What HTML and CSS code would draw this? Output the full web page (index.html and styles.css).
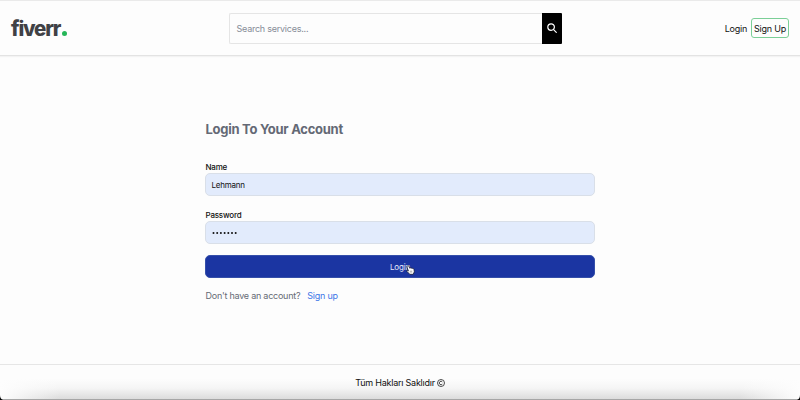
FILE: index.html
```html
<!DOCTYPE html>
<html lang="tr">
<head>
<meta charset="utf-8">
<title>Login</title>
<link rel="stylesheet" href="styles.css">
</head>
<body>
<header class="header">
  <a class="logo">fiverr<span class="logo-dot"></span></a>
  <form class="search">
    <span class="search-field"><span class="search-text">Search services...</span></span>
    <span class="search-button">
      <svg width="10" height="10" viewBox="0 0 10 10" fill="none" stroke="#fff" stroke-width="1.2" stroke-linecap="round"><circle cx="4.1" cy="4.1" r="3.3"/><path d="M6.6 6.6 9.3 9.3"/></svg>
    </span>
  </form>
  <nav class="nav"><a class="nav-login">Login</a><a class="signup"><span class="signup-text">Sign Up</span></a></nav>
</header>
<main class="main">
  <h1 class="title"><span class="title-text">Login To Your Account</span></h1>
  <div class="label"><span class="name-label">Name</span></div>
  <div class="input"><span class="name-value">Lehmann</span></div>
  <div class="label label-second"><span class="password-label">Password</span></div>
  <div class="input"><svg width="26" height="4" viewBox="0 0 26 4" fill="#111"><circle cx="1.5" cy="2" r="1"/><circle cx="5.2" cy="2" r="1"/><circle cx="8.9" cy="2" r="1"/><circle cx="12.6" cy="2" r="1"/><circle cx="16.3" cy="2" r="1"/><circle cx="20" cy="2" r="1"/><circle cx="23.7" cy="2" r="1"/></svg></div>
  <div class="button"><span class="button-text">Login</span>
    <svg class="cursor" width="9" height="10" viewBox="0 0 9 10"><path d="M1.3 1Q2.3.1 2.9 1.2L3.7 3.2Q4.6 2.5 5.2 3.2 6.1 2.6 6.7 3.5 7.8 3.3 8 4.5L8.3 6.8 7.2 9.3H3.8L1 6.4Q.5 5.5 1.3 5.3L2.4 6 1 2Q.8 1.4 1.3 1Z" fill="#fff" stroke="#161d36" stroke-width=".8"/><path d="M4.3 5.6v2M5.7 5.6v2" stroke="#555" stroke-width=".5"/></svg>
  </div>
  <p class="prompt"><span class="question">Don't have an account?</span><a class="link">Sign up</a></p>
</main>
<footer class="footer"><span class="rights">Tüm Hakları Saklıdır</span>
  <svg width="8" height="8" viewBox="0 0 8 8" fill="none" stroke="#222" stroke-width=".8"><circle cx="4" cy="4" r="3.5"/><path d="M5.3 2.9A1.7 1.7 0 1 0 5.3 5.1"/></svg>
  <svg class="corner corner-left" width="3" height="5"><path d="M0 0Q0 4 3 5H0Z"/></svg>
  <svg class="corner corner-right" width="3" height="5"><path d="M3 0Q3 4 0 5H3Z"/></svg>
</footer>
</body>
</html>
```
FILE: styles.css
```css
* { box-sizing: border-box; }
body {
  margin: 0;
  width: 800px;
  height: 400px;
  overflow: hidden;
  display: flex;
  flex-direction: column;
  background: #fdfdfd;
  color: #111;
  font-family: Inter, "Liberation Sans", sans-serif;
  font-size: 9px;
  letter-spacing: -0.24px;
  white-space: nowrap;
}
.header {
  height: 56px;
  flex: none;
  display: grid;
  grid-template-columns: 218px 333px 1fr;
  align-items: center;
  padding: 0 11px;
  border-top: 1px solid #eaeaea;
  border-bottom: 1px solid #e3e3e3;
  box-shadow: 0 1px 1px #f3f3f3;
}
.logo {
  display: flex;
  align-items: baseline;
  padding-top: 1px;
  font-size: 20.5px;
  line-height: 26px;
  font-weight: 800;
  letter-spacing: -1.2px;
  color: #404145;
}
.logo-dot { width: 5px; height: 5px; margin-left: 2px; border-radius: 50%; background: #25b658; }
.search { display: flex; height: 31px; margin: 0; }
.search-field {
  flex: 1;
  display: flex;
  align-items: center;
  padding-left: 6.5px;
  border: 1px solid #e5e5e5;
  border-right: 0;
  border-radius: 2px 0 0 2px;
  color: #868c97;
}
.search-button { width: 20px; display: flex; align-items: center; justify-content: center; background: #000; border-radius: 0 1px 1px 0; }
.nav { display: flex; align-items: center; justify-content: flex-end; gap: 4px; }
.signup { width: 38px; height: 20px; display: flex; align-items: center; justify-content: center; border: 1px solid #7bcf97; border-radius: 3px; }
.main { width: 390px; height: 308px; flex: none; margin-left: 205px; padding-top: 65px; }
.title { margin: 0; height: 16px; line-height: 16px; font-size: 13px; letter-spacing: -0.27px; color: #646975; }
.label { height: 10px; line-height: 10px; margin-top: 25px; margin-bottom: 1px; font-size: 8px; letter-spacing: -0.2px; font-weight: 500; }
.label-second { margin-top: 14px; }
.title, .label, .prompt { padding-left: 0.5px; }
.input {
  height: 23px;
  display: flex;
  align-items: center;
  padding-left: 5.5px;
  border: 1px solid #d9dfe8;
  border-radius: 5px;
  background: #e2ebfc;
  font-size: 8px;
  letter-spacing: -0.25px;
}
.button {
  position: relative;
  height: 23px;
  display: flex;
  align-items: center;
  justify-content: center;
  margin-top: 11px;
  border: 1px solid #354fa9;
  border-radius: 5px;
  background: #1b35a2;
  color: #e7ebfa;
  font-size: 8px;
  letter-spacing: -0.2px;
}
.cursor { position: absolute; left: 200px; top: 9px; }
.prompt { display: flex; gap: 7px; margin: 11px 0 0; line-height: 14px; color: #656b75; }
.link { color: #3f78e8; }
.footer {
  position: relative;
  flex: 1;
  display: flex;
  align-items: center;
  justify-content: center;
  gap: 2px;
  padding-top: 1px;
  border-top: 1px solid #e6e6e6;
  border-bottom: 1px solid #a6a6a6;
  background: linear-gradient(90deg, #fdfdfd 0, transparent 60px, transparent 740px, #fdfdfd 100%), linear-gradient(#fdfdfd 40%, #f5f5f5 68%, #dcdcdc);
}
.corner { position: absolute; bottom: -1px; }
.corner-left { left: 0; }
.corner-right { right: 0; }
```
